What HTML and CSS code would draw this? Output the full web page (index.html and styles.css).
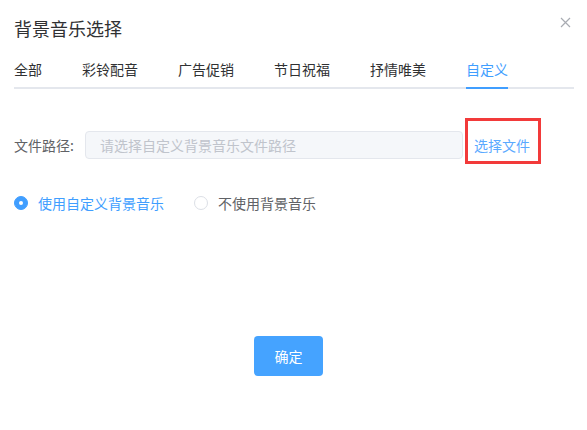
FILE: index.html
```html
<!DOCTYPE html>
<html lang="zh-CN">
<head>
<meta charset="utf-8">
<link rel="stylesheet" href="styles.css">
</head>
<body>
<div class="dialog">
  <div class="header">
    <span class="title">背景音乐选择</span>
    <span class="close" aria-label="关闭">
      <svg width="11" height="11" viewBox="0 0 11 11"><path d="M1 1L10 10M10 1L1 10" stroke="#a8abb2" stroke-width="1.2" fill="none"/></svg>
    </span>
  </div>
  <div class="tabs">
    <div class="tab">全部</div>
    <div class="tab">彩铃配音</div>
    <div class="tab">广告促销</div>
    <div class="tab">节日祝福</div>
    <div class="tab">抒情唯美</div>
    <div class="tab active">自定义</div>
  </div>
  <div class="form-row">
    <label class="label">文件路径:</label>
    <div class="input">请选择自定义背景音乐文件路径</div>
    <a class="pick">选择文件<span class="mark"></span></a>
  </div>
  <div class="radios">
    <label class="radio checked"><span class="dot"></span><span class="rtext">使用自定义背景音乐</span></label>
    <label class="radio"><span class="dot"></span><span class="rtext">不使用背景音乐</span></label>
  </div>
  <div class="footer">
    <button class="btn">确定</button>
  </div>
</div>
</body>
</html>
```
FILE: styles.css
```css
* { box-sizing: border-box; }
html, body { margin: 0; padding: 0; background: #fff; }
body {
  font-family: "Noto Sans CJK SC", "Noto Sans", sans-serif;
  color: #303133;
  width: 587px;
  height: 430px;
  overflow: hidden;
}
.dialog {
  padding: 14px 13px 0 14px;
}
.header {
  position: relative;
  height: 28px;
  display: flex;
  align-items: center;
}
.title {
  font-size: 18px;
  line-height: 28px;
  color: #303133;
}
.close {
  position: absolute;
  right: 3px;
  top: 3px;
  width: 11px;
  height: 11px;
  display: block;
}
.close svg { display: block; }
.tabs {
  margin-top: 7px;
  display: flex;
  position: relative;
  height: 40px;
}
.tabs::after {
  content: "";
  position: absolute;
  left: 0; right: 0; bottom: 0;
  height: 2px;
  background: #e4e7ed;
}
.tab {
  position: relative;
  padding: 0 20px;
  height: 40px;
  line-height: 40px;
  font-size: 14px;
  color: #303133;
}
.tab:first-child { padding-left: 0; }
.tab:last-child { padding-right: 0; }
.tab.active { color: #409eff; }
.tab.active::after {
  content: "";
  position: absolute;
  left: 20px; right: 0; bottom: 0;
  height: 2px;
  background: #409eff;
  z-index: 1;
}
.form-row {
  margin-top: 42px;
  display: flex;
  align-items: center;
  height: 28px;
}
.label {
  width: 71px;
  font-size: 14px;
  color: #606266;
}
.input {
  width: 378px;
  height: 28px;
  border: 1px solid #e4e7ed;
  background: #f5f7fa;
  border-radius: 4px;
  padding-left: 14px;
  font-size: 14px;
  line-height: 26px;
  color: #c0c4cc;
}
.pick {
  position: relative;
  margin-left: 11px;
  font-size: 14px;
  color: #5aa9ff;
  line-height: 28px;
}
.mark {
  position: absolute;
  left: -9px;
  top: -13px;
  width: 76px;
  height: 46px;
  border: 3px solid #f23a3a;
}
.radios {
  margin-top: 34px;
  display: flex;
  align-items: center;
  height: 20px;
}
.radio {
  display: flex;
  align-items: center;
  margin-right: 30px;
  font-size: 14px;
  color: #606266;
}
.dot {
  width: 14px;
  height: 14px;
  border-radius: 50%;
  border: 1px solid #dcdfe6;
  background: #fff;
  position: relative;
}
.radio.checked .dot {
  border-color: #409eff;
  background: #409eff;
}
.radio.checked .dot::after {
  content: "";
  position: absolute;
  width: 4px;
  height: 4px;
  border-radius: 50%;
  background: #fff;
  left: 4px;
  top: 4px;
}
.rtext { padding-left: 10px; }
.radio.checked .rtext { color: #409eff; }
.footer {
  margin-top: 123px;
  display: flex;
  justify-content: center;
  padding-right: 11px;
}
.btn {
  width: 69px;
  height: 40px;
  border: none;
  border-radius: 4px;
  background: #45a3ff;
  color: #fff;
  font-family: inherit;
  font-size: 14px;
  padding: 0;
}
```
